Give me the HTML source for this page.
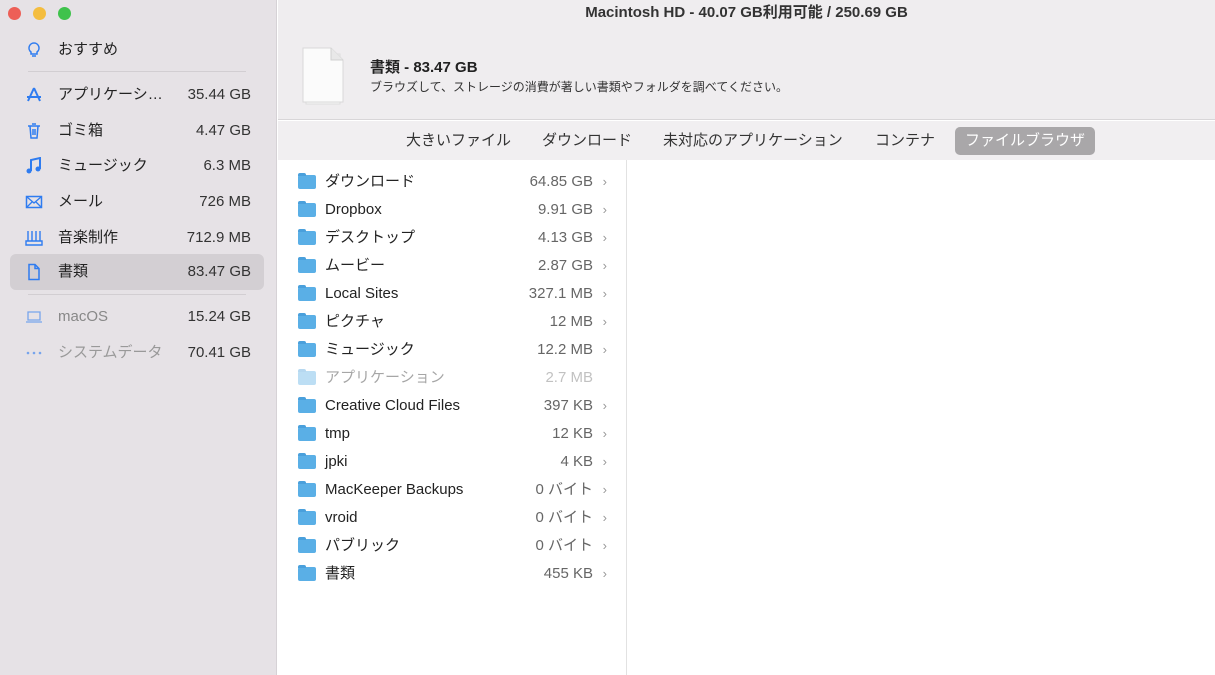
<!DOCTYPE html>
<html><head><meta charset="utf-8"><style>
*{margin:0;padding:0;box-sizing:border-box}
body{width:1215px;height:675px;overflow:hidden;font-family:"Liberation Sans","Noto Sans CJK JP",sans-serif;background:#fff;position:relative;color:#222}
.side{position:absolute;left:0;top:0;width:277px;height:675px;background:#e6e2e6;border-right:1px solid #d6d2d6}
.dot{position:absolute;top:7px;width:13px;height:13px;border-radius:50%}
.si{position:absolute;left:10px;width:254px;height:36px;font-size:15px;line-height:36px}
.si .ic{position:absolute;left:15px;top:9px;width:18px;height:18px;color:#2f7cf0}
.si .t{position:absolute;left:48px}
.si .v{position:absolute;right:13px;color:#333}
.sep{position:absolute;left:28px;width:218px;height:1px;background:#d2ced2}
.title{position:absolute;left:278px;top:0;width:937px;height:30px;background:#efedef;text-align:center;font-size:15px;font-weight:bold;line-height:26px;color:#333}
.head{position:absolute;left:278px;top:30px;width:937px;height:90px;background:#efedef;border-bottom:1px solid #d8d6d8}
.tabs{position:absolute;left:278px;top:121px;width:937px;height:39px;background:#f1eff1;font-size:15px}
.tab{position:absolute;top:6px;height:28px;line-height:28px;padding:0 10px;color:#333}
.list{position:absolute;left:278px;top:160px;width:349px;height:515px;border-right:1px solid #e2e2e2}
.r{position:absolute;left:0;width:330px;height:28px;font-size:15px;line-height:28px}
.r .f{position:absolute;left:20px;top:7px;width:18px;height:14px;background:#5aafe6;border-radius:2px}
.r .f:before{content:"";position:absolute;left:0;top:-2px;width:8px;height:3px;background:#4aa0dc;border-radius:2px 2px 0 0}
.r .n{position:absolute;left:47px}
.r .s{position:absolute;right:15px;color:#666}
.r .c{position:absolute;right:1px;color:#999;font-size:13px}
.dim{opacity:.4}
</style></head><body>
<div class="side">
<div class="dot" style="left:8px;background:#ed5f57"></div>
<div class="dot" style="left:33px;background:#f4bd3f"></div>
<div class="dot" style="left:58px;background:#3fc24c"></div>
<div class="si" style="top:32px"><svg class="ic" viewBox="0 0 18 18"><path d="M9 2a5 5 0 0 0-3 9v2h6v-2a5 5 0 0 0-3-9zM7 15h4" fill="none" stroke="#2f7cf0" stroke-width="1.5"/></svg><span class="t">おすすめ</span></div>
<div class="sep" style="top:71px"></div>
<div class="si" style="top:77px"><svg class="ic" viewBox="0 0 18 18"><path d="M9 2L3 15M9 2l6 13M2 11h14" fill="none" stroke="#2f7cf0" stroke-width="2"/></svg><span class="t">アプリケーシ…</span><span class="v">35.44 GB</span></div>
<div class="si" style="top:113px"><svg class="ic" viewBox="0 0 18 18"><path d="M3 4h12M5 4l1 12h6l1-12M7 2h4M8 7v6M10 7v6" fill="none" stroke="#2f7cf0" stroke-width="1.5"/></svg><span class="t">ゴミ箱</span><span class="v">4.47 GB</span></div>
<div class="si" style="top:148px"><svg class="ic" viewBox="0 0 18 18"><path d="M6 14V3l9-2v11" fill="none" stroke="#2f7cf0" stroke-width="2"/><circle cx="4" cy="14" r="2.5" fill="#2f7cf0"/><circle cx="13" cy="12" r="2.5" fill="#2f7cf0"/></svg><span class="t">ミュージック</span><span class="v">6.3 MB</span></div>
<div class="si" style="top:184px"><svg class="ic" viewBox="0 0 18 18"><rect x="1.5" y="3.5" width="15" height="11" fill="none" stroke="#2f7cf0" stroke-width="1.5"/><path d="M2 4l7 6 7-6M2 14l5-5M16 14l-5-5" fill="none" stroke="#2f7cf0" stroke-width="1.3"/></svg><span class="t">メール</span><span class="v">726 MB</span></div>
<div class="si" style="top:220px"><svg class="ic" viewBox="0 0 18 18"><path d="M3 2v10M7 2v10M11 2v10M15 2v10M1 12h16v4H1z" fill="none" stroke="#2f7cf0" stroke-width="1.4"/></svg><span class="t">音楽制作</span><span class="v">712.9 MB</span></div>
<div class="si" style="top:254px;background:#d3cfd3;border-radius:6px"><svg class="ic" viewBox="0 0 18 18"><path d="M4 1.5h6l4 4v11H4zM10 1.5v4h4" fill="none" stroke="#2f7cf0" stroke-width="1.5"/></svg><span class="t">書類</span><span class="v">83.47 GB</span></div>
<div class="sep" style="top:294px"></div>
<div class="si" style="top:299px;color:#888"><svg class="ic" viewBox="0 0 18 18" style="opacity:.6"><path d="M3 4h12v8H3zM1 14h16" fill="none" stroke="#2f7cf0" stroke-width="1.3"/></svg><span class="t">macOS</span><span class="v">15.24 GB</span></div>
<div class="si" style="top:335px;color:#999"><svg class="ic" viewBox="0 0 18 18" style="opacity:.6"><circle cx="3" cy="9" r="1.3" fill="#2f7cf0"/><circle cx="9" cy="9" r="1.3" fill="#2f7cf0"/><circle cx="15" cy="9" r="1.3" fill="#2f7cf0"/></svg><span class="t">システムデータ</span><span class="v">70.41 GB</span></div>
</div>
<div class="title">Macintosh HD - 40.07 GB利用可能 / 250.69 GB</div>
<div class="head">
<svg style="position:absolute;left:22px;top:14px" width="54" height="62" viewBox="0 0 54 62"><path d="M6 10h34v50H6z" fill="#f6f6f6" stroke="#ddd"/><path d="M3 4h28l12 12v42H3z" fill="#fbfbfb" stroke="#d8d8d8"/><path d="M31 4v12h12" fill="#e8e8e8" stroke="#d0d0d0"/></svg>
<div style="position:absolute;left:92px;top:26px;font-size:15px;font-weight:bold;color:#222">書類 - 83.47 GB</div>
<div style="position:absolute;left:92px;top:48px;font-size:12px;color:#333">ブラウズして、ストレージの消費が著しい書類やフォルダを調べてください。</div>
</div>
<div class="tabs">
<div class="tab" style="left:118px">大きいファイル</div>
<div class="tab" style="left:254px">ダウンロード</div>
<div class="tab" style="left:375px">未対応のアプリケーション</div>
<div class="tab" style="left:587px">コンテナ</div>
<div class="tab" style="left:677px;background:#a9a7a9;color:#fff;border-radius:5px">ファイルブラウザ</div>
</div>
<div class="list">
<div class="r" style="top:8px"><i class="f"></i><span class="n">ダウンロード</span><span class="s">64.85 GB</span><span class="c">›</span></div>
<div class="r" style="top:36px"><i class="f"></i><span class="n">Dropbox</span><span class="s">9.91 GB</span><span class="c">›</span></div>
<div class="r" style="top:64px"><i class="f"></i><span class="n">デスクトップ</span><span class="s">4.13 GB</span><span class="c">›</span></div>
<div class="r" style="top:92px"><i class="f"></i><span class="n">ムービー</span><span class="s">2.87 GB</span><span class="c">›</span></div>
<div class="r" style="top:120px"><i class="f"></i><span class="n">Local Sites</span><span class="s">327.1 MB</span><span class="c">›</span></div>
<div class="r" style="top:148px"><i class="f"></i><span class="n">ピクチャ</span><span class="s">12 MB</span><span class="c">›</span></div>
<div class="r" style="top:176px"><i class="f"></i><span class="n">ミュージック</span><span class="s">12.2 MB</span><span class="c">›</span></div>
<div class="r dim" style="top:204px"><i class="f"></i><span class="n">アプリケーション</span><span class="s">2.7 MB</span></div>
<div class="r" style="top:232px"><i class="f"></i><span class="n">Creative Cloud Files</span><span class="s">397 KB</span><span class="c">›</span></div>
<div class="r" style="top:260px"><i class="f"></i><span class="n">tmp</span><span class="s">12 KB</span><span class="c">›</span></div>
<div class="r" style="top:288px"><i class="f"></i><span class="n">jpki</span><span class="s">4 KB</span><span class="c">›</span></div>
<div class="r" style="top:316px"><i class="f"></i><span class="n">MacKeeper Backups</span><span class="s">0 バイト</span><span class="c">›</span></div>
<div class="r" style="top:344px"><i class="f"></i><span class="n">vroid</span><span class="s">0 バイト</span><span class="c">›</span></div>
<div class="r" style="top:372px"><i class="f"></i><span class="n">パブリック</span><span class="s">0 バイト</span><span class="c">›</span></div>
<div class="r" style="top:400px"><i class="f"></i><span class="n">書類</span><span class="s">455 KB</span><span class="c">›</span></div>
</div>
</body></html>
